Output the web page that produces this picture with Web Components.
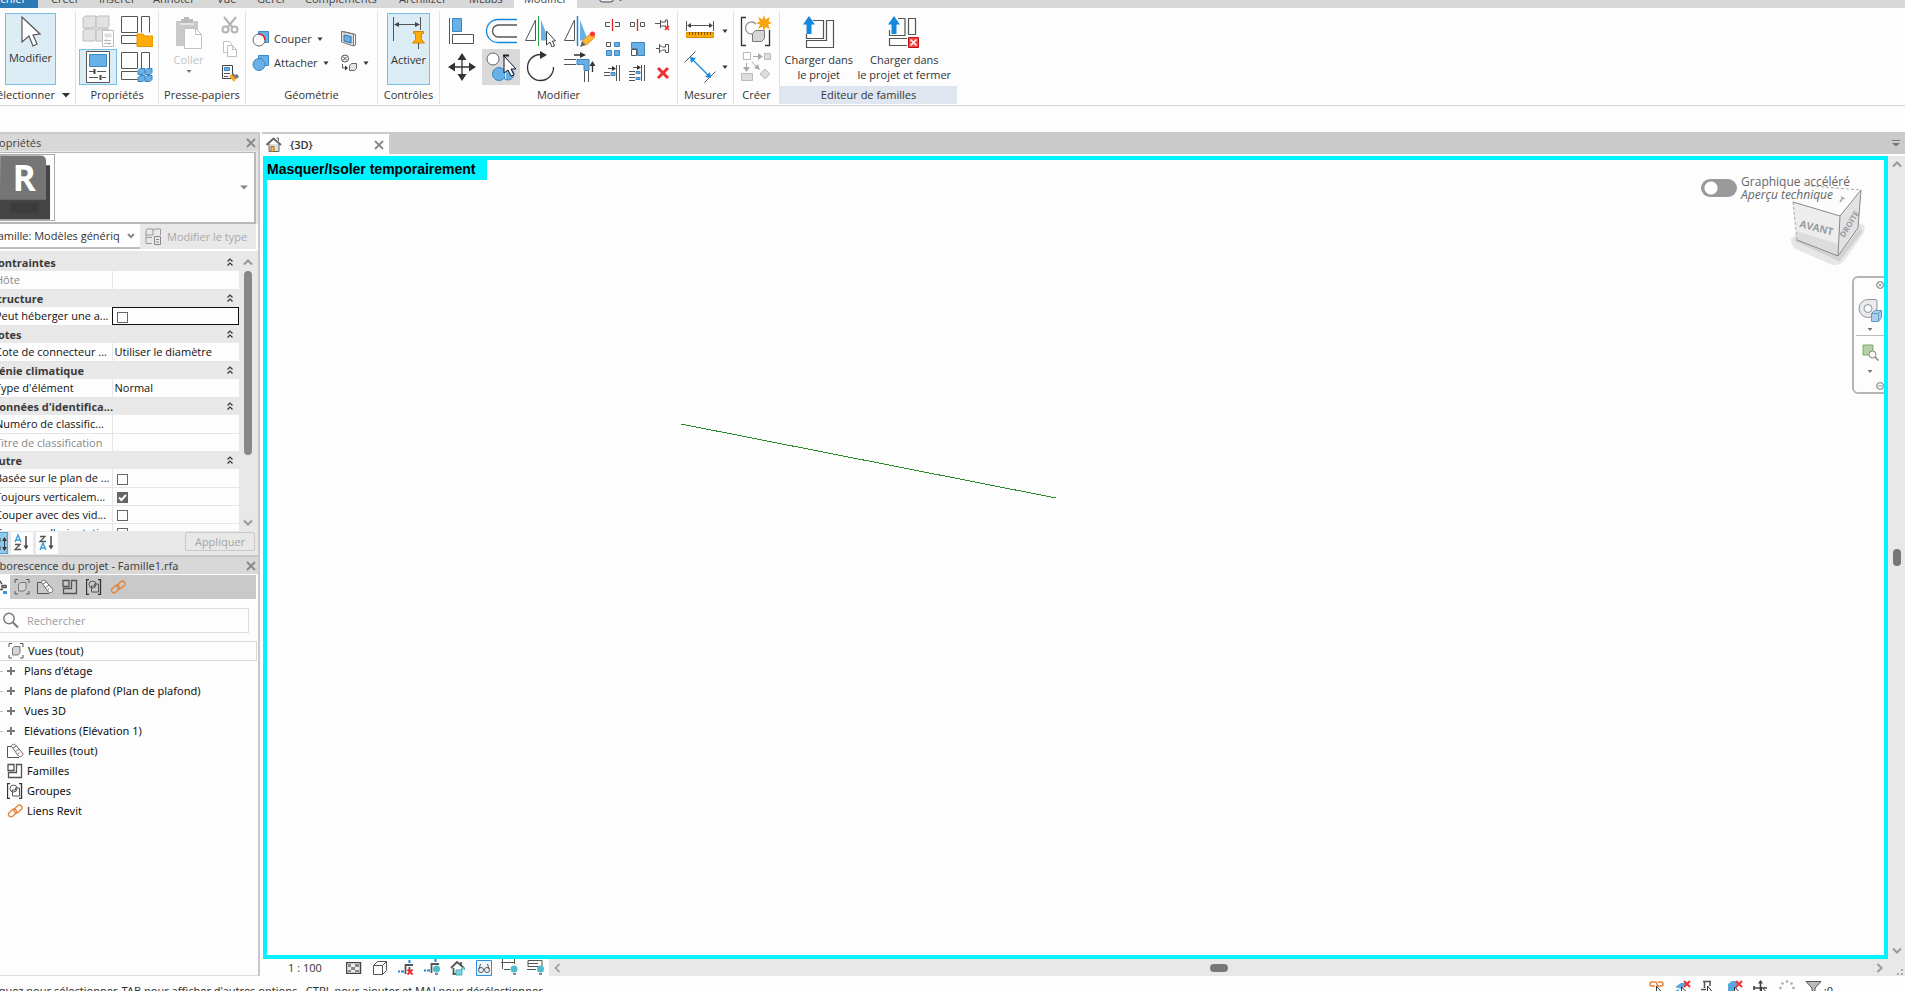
<!DOCTYPE html>
<html lang="fr">
<head>
<meta charset="utf-8">
<title>Famille1.rfa</title>
<style>
html,body{margin:0;height:100%;overflow:hidden;background:#fdfdfd}
body{font:11px/16px "Open Sans","Noto Sans",sans-serif;color:#333}
</style>
</head>
<body>
<rv-app></rv-app>
<script>
const RESET = `*{box-sizing:border-box}button,input,select{font:inherit;color:inherit;margin:0;padding:0;border:0;background:none}`;
function define(name, css, html, setup) {
  const t = document.createElement('template');
  t.innerHTML = `<style>${RESET}${css}</style>${html}`;
  customElements.define(name, class extends HTMLElement {
    constructor() { super(); this.attachShadow({mode: 'open'}).append(t.content.cloneNode(true)); }
    connectedCallback() { if (setup) setup(this, this.shadowRoot); }
  });
}

const G = 'fill="none" stroke="#555"', B = 'fill="#68b1e6" stroke="#3c87c0"';
const cube4 = (x, y, s, f, k) => [[0,0],[1,0],[0,1],[1,1]].map(([i,j]) => `<path d="M${x+i*s} ${y+2+j*s}l2-2h${s-2}v${s-3}l-2 2h-${s-2}z" fill="${f}" stroke="${k}"/>`).join('');
const redx = (x, y, s, w = 2) => `<path d="M${x} ${y}l${s} ${s}M${x+s} ${y}l-${s} ${s}" stroke="#f03030" stroke-width="${w}" fill="none"/>`;
const rooms = '<path d="M.5 1.500h16v16H.5zM20.500 17.500v-16h8v16M.5 20.500h16M.5 20.500v8h16" fill="none" stroke="#555"/>';
const ICONS = {
 caret: [8,5,'<path d="M1.500.5h5L4 4z" fill="#333"/>'],
 caretBig: [8,6,'<path d="M0 1h8L4 5.500z" fill="#333"/>'],
 caretGray: [8,5,'<path d="M0 .5h8L4 4.500z" fill="#888"/>'],
 caretSmall: [6,5,'<path d="M.5 1h5L3 4z" fill="#777"/>'],
 chevDown: [8,6,'<path d="M1 1l3 3 3-3" fill="none" stroke="#888" stroke-width="2"/>'],
 cursor: [20,32,'<path d="M1 1v25l7-6 4 10 4-2-4-9 7-1z" fill="#fff" stroke="#555" stroke-width="1.200"/>'],
 types: [32,32, cube4(1,1,13,'#e2e2e2','#bdbdbd') + '<path d="M20.500 15.500h11v16h-11z" fill="#fff" stroke="#bbb"/><path d="M22.500 18.500h7v4h-7z" fill="#ddd"/><path d="M22 25.500h7m-7 3h7m-5-4.500v3m3 0v3" stroke="#bbb"/>'],
 catFolder: [32,32, rooms + '<path d="M16 19h6l2 2h8v10.500H16z" fill="#ffab0a" stroke="#e59400"/>'],
 catCubes: [32,32, rooms + cube4(17,17.500,7,'#68b1e6','#3c87c0')],
 propPanel: [24,32,'<path d="M.5.5h23v31H.5z" fill="#fff" stroke="#555"/><path d="M3.500 3.500h17v12h-17z" '+B+'/><path d="M3 20.500h5m3 0h9M3 26.500h9m4 0h4" stroke="#555"/><path d="M8.500 18v5m6 1v5" stroke="#444" stroke-width="2"/>'],
 paste: [28,34,'<path d="M1 5h22v25H1z" fill="#c9c9c9"/><path d="M6 3h3V1h5v2h4v4H6z" fill="#bbb"/><path d="M5 8h14" stroke="#fff"/><path d="M9.500 12.500h11l6 6v14h-17z" fill="#fff" stroke="#c2c2c2"/><path d="M20.500 12.500v6h6" fill="none" stroke="#c2c2c2"/>'],
 cut: [18,18,'<path d="M3 1l9 11M15 1L6 12" stroke="#b4b4b4" stroke-width="2"/><circle cx="4.500" cy="13.500" r="3" fill="none" stroke="#b4b4b4" stroke-width="2"/><circle cx="13.500" cy="13.500" r="3" fill="none" stroke="#b4b4b4" stroke-width="2"/>'],
 copyDoc: [14,16,'<path d="M.5.5h6l2 2v9h-8z" fill="#fff" stroke="#bfbfbf"/><path d="M4.500 4.500h5l4 4v7h-9z" fill="#fff" stroke="#bfbfbf"/><path d="M9.500 4.500v4h4" fill="none" stroke="#bfbfbf"/>'],
 matchType: [18,18,'<path d="M1.500 1.500h10v13h-10z" fill="#fff" stroke="#444"/><path d="M3.500 3.500h5v3h-5z" '+B+'/><path d="M3 9.500h6M3 12.500h4" stroke="#555"/><path d="M8 12l3-2 4 5-2 3z" fill="#ffa61a"/><path d="M12 9l2 2 2-1 2 3-3 2-4-4z" fill="#777"/>'],
 coupe: [18,18,'<path d="M6.500 1.500h10v11h-10z" '+B+'/><circle cx="7" cy="10" r="6" fill="#fff" stroke="#666"/><path d="M7 4a6 6 0 0 1 6 6" fill="none" stroke="#e02020" stroke-width="1.500"/>'],
 attach: [18,18,'<path d="M6.500 1.500h10v10h-10z" '+B+'/><circle cx="7" cy="10.500" r="6" '+B+'/>'],
 opening: [18,18,'<path d="M1.500 1.500l12 2.500v12l-12-4z" fill="#dcdcdc" stroke="#777"/><path d="M1.500 1.500h2l12 3v10.500l-2 1" fill="none" stroke="#777"/><path d="M4 5l7 1.500v6.500l-7-2z" fill="#68b1e6" stroke="#2a6fae"/>'],
 paint: [18,18,'<circle cx="5" cy="4.500" r="3.500" '+G+'/><path d="M3 2.500l4 4m0-4l-4 4M2.500 10v4h3" '+G+'/><path d="M9.500 11.500l2-2h5v5l-2 2h-5z" fill="#e4e4e4" stroke="#666"/><path d="M5 11.500l3 2.500-3 2.500z" fill="#333"/>'],
 pinDim: [34,34,'<path d="M1.500 1v24M28.500 1v13M3 8.500h24" '+G+'/><path d="M2 8.500l5-2.500v5zM28 8.500l-5-2.500v5z" fill="#444"/><path d="M21.500 15.500h10v2h-2v6l3 3.500h-12l3-3.500v-6h-2z" fill="#ffab0a" stroke="#d48800"/><path d="M26.500 27v6" stroke="#555"/>'],
 align: [28,28,'<path d="M1.500 1v26" stroke="#555"/><path d="M4.500 1.500h9v13h-9z" '+B+'/><path d="M4.500 17.500h21v9h-21z" '+G+'/>'],
 offset: [32,26,'<path d="M32 1.500H13a11.500 11.500 0 0 0 0 23h19" fill="none" stroke="#1488dd" stroke-width="1.300"/><path d="M32 7H13.500a6 6 0 0 0 0 12H32" '+G+' stroke-width="1.300"/>'],
 mirrorPick: [32,32,'<path d="M1.500 25.500L11.500 5v20.500z" '+G+'/><path d="M14.500 1v30" stroke="#1fa04c"/><path d="M17 25.500V5l8 20.500z" fill="#68b1e6"/><path d="M22.500 16v14l3.500-3 2 5 2.500-1-2-5h3z" fill="#fff" stroke="#444"/>'],
 mirrorDraw: [32,32,'<path d="M1.500 25.500L11.500 5v20.500z" '+G+'/><path d="M14.500 1v30" stroke="#1488dd" stroke-width="1.500"/><path d="M17 25.500V5l8 20.500z" fill="#68b1e6"/><path d="M17 32l2-6 4 4z" fill="#666"/><path d="M19.500 26L28 18l4 4-8.500 8z" fill="#ffb636" stroke="#e09a20"/><circle cx="29.500" cy="19" r="2.500" fill="#f33"/>'],
 move: [28,28,'<path d="M14 4v20M4 14h20" stroke="#333" stroke-width="1.300"/><path d="M14 0l4.500 7h-9zM14 28l4.500-7h-9zM0 14l7-4.500v9zM28 14l-7-4.500v9z" fill="#333"/>'],
 copy: [32,32,'<circle cx="8" cy="8" r="6" fill="#fff" stroke="#666"/><circle cx="23" cy="23" r="6" '+B+'/><circle cx="14" cy="23" r="6.500" '+B+' /><path d="M20.500 18v10" stroke="#ddd"/><path d="M18 4.500h6" stroke="#223" stroke-width="2"/><path d="M19 5v17l4-3 3 6 3-1-3-6h5z" fill="#fff" stroke="#112"/>'],
 rotate: [30,32,'<path d="M16 3.500A13 13 0 1 0 28.500 16" fill="none" stroke="#333" stroke-width="1.300"/><path d="M15 0l7 4-7 4z" fill="#333"/>'],
 trim: [32,32,'<path d="M1 8.500h12M1 13.500h12M21.500 20v11M25.500 20v11" '+G+'/><path d="M14 8.500h12v11h-5v-6h-7z" '+B+'/><path d="M11 4h8M29.500 13v8" stroke="#333" stroke-width="1.300"/><path d="M17 1l6 3-6 3zM26.500 15l3-5 3 5z" fill="#333"/>'],
 split: [18,14,'<path d="M6 4.500H1.500v4H6M11 4.500h4.500v4H11" '+G+'/><path d="M8.500 1v12" stroke="#d22" stroke-width="1.300"/>'],
 splitGap: [18,14,'<path d="M1.500 4.500h4v4h-4zM11.500 4.500h4v4h-4z" '+G+'/><path d="M8.500 1v12" stroke="#d22" stroke-width="1.300"/>'],
 unpin: [16,14,'<path d="M0 5.500h5M5.500 2v8M5.500 4h5v-2h2v8h-2v-2h-5" '+G+'/>'+redx(10,8,4,1.600)],
 pin: [16,12,'<path d="M1 5.500h4M4.500 1v9M4.500 3h2l1 1h3V1.500h3v8h-3V7h-3l-1 1h-2" '+G+'/>'],
 array: [16,16,'<path d="M1.500 1.500h4v4h-4z" '+G+'/><path d="M9.500 1.500h5v4h-5zM9.500 9.500h5v5h-5zM1.500 9.500h5v5h-5z" '+B+'/>'],
 scale: [16,16,'<path d="M1.500 1.500h13v13h-7v-7h-6z" '+B+'/><path d="M1.500 8.500h5v6h-5z" fill="#fff" stroke="#555"/>'],
 trim1: [18,16,'<path d="M12.500 0v16M15.500 0v16M0 7.500h6M0 10.500h6M4 3.500h6" '+G+'/><path d="M7 7.500h4v3H7z" '+B+'/><path d="M8 1l4 2.500L8 6z" fill="#333"/>'],
 trim2: [18,16,'<path d="M12.500 0v16M15.500 0v16M0 6.500h6M0 9.500h6M0 12.500h6M0 15.500h6M4 2.500h6" '+G+'/><path d="M7 6.500h4v2H7zM7 12.500h4v2H7z" '+B+'/><path d="M8 0l4 2.500L8 5z" fill="#333"/>'],
 del: [14,14, redx(2,2,10,3)],
 ruler: [32,20,'<path d="M2.500 0v10M29.500 0v10M4 4.500h24" '+G+'/><path d="M3 4.500L7 2v5zM29 4.500L25 2v5z" fill="#444"/><path d="M2.500 11.500h27v5h-27z" fill="#ffab0a" stroke="#d98c00"/><path d="M5.500 11v3m3-3v3m3-3v3m3-3v3m3-3v3m3-3v3m3-3v3m3-3v3" stroke="#7a5200"/>'],
 dim: [32,32,'<path d="M.5 11.500l11-11M20.500 31.500l11-11" '+G+'/><path d="M8 8l17 17" stroke="#1488dd" stroke-width="1.300"/><path d="M6 6l6 1-5 5zM27 27l-6-1 5-5z" fill="#1488dd"/>'],
 group: [32,32,'<path d="M6 2.500H1.500v28H6M25 30.500h4.500V15" fill="none" stroke="#333" stroke-width="1.300"/><path d="M12 19a6 6 0 1 1 4-10" fill="none" stroke="#999" stroke-width="1.300"/><path d="M12.500 18.500l3-3h9v8l-3 3h-9z" fill="#d5d5d5" stroke="#777"/><path d="M24 0l1.500 4.500L30 2l-1.500 4.500L32 8l-4 1.500 2 4.500-4.500-2L24 16l-1.500-4.500L18 14l2-4.500L16 8l4-1.500L18 2l4.500 2.500z" fill="#f7a30c"/>'],
 similar: [32,32,'<path d="M3.500 1.500h7v7h-7z" fill="#fff" stroke="#bbb"/><path d="M24.500 2.500h6v6h-6zM1.500 22.500h11v7h-11zM25 18l5 5-5 5-5-5z" fill="#ddd" stroke="#bbb"/><path d="M13 5.500h6M6.500 12v5M12 11l5 5" stroke="#aaa"/><path d="M18 2l5 3.500L18 9zM3 16h7l-3.500 5zM20 19l-6-2 4-4z" fill="#aaa"/>'],
 load: [34,34,'<path d="M11 4.500h10.500v18H4.500V18M24.500 4.500h7v27h-27v-7h20z" '+G+' stroke-width="1.200"/><path d="M7 0l6 8.500H9.500V18h-5V8.500H1z" fill="#1488dd"/>'],
 loadClose: [34,34,'<path d="M11 2.500h7v17H2.500V14M21.500 2.500h7v16h-7zM20 22.500H2.500v7H20" '+G+' stroke-width="1.200"/><path d="M7 0l6 8.500H9.500V18h-5V8.500H1z" fill="#1488dd"/><path d="M21.500 21.500h10v10h-10z" fill="#f44" stroke="#b11"/><path d="M23.500 23.500l6 6m0-6l-6 6" stroke="#fff" stroke-width="1.500"/>'],
 close: [10,10,'<path d="M1 1l8 8M9 1L1 9" stroke="#888" stroke-width="1.800"/>'],
 chevs: [6,8,'<path d="M.5 3.500L3 1l2.500 2.500M.5 7.500L3 5l2.500 2.500" fill="none" stroke="#333" stroke-width="1.200"/>'],
 up: [10,7,'<path d="M1 5.500L5 1.500l4 4" fill="none" stroke="#999" stroke-width="2"/>'],
 down: [10,7,'<path d="M1 1.500l4 4 4-4" fill="none" stroke="#999" stroke-width="2"/>'],
 left: [7,10,'<path d="M5.500 1L1.500 5l4 4" fill="none" stroke="#999" stroke-width="1.600"/>'],
 right: [7,10,'<path d="M1.500 1l4 4-4 4" fill="none" stroke="#999" stroke-width="2"/>'],
 tabList: [10,8,'<path d="M1 1.500h8" stroke="#777"/><path d="M1 4h8L5 7.500z" fill="#777"/>'],
 grip: [8,8,'<path d="M5 0h2v2H5zM5 4h2v2H5zM1 4h2v2H1z" fill="#aaa"/>'],
 editType: [17,17,'<path d="M1 2.500l1-1.500h6v6H1zM8.500 2.500l1-1.500h6v6M1 9.500h6M1 7v8.500h6" fill="none" stroke="#999"/><path d="M9.500 8.500h6v8h-6zM11 11.500h3M11 14h3" fill="none" stroke="#888"/>'],
 sortCat: [22,22,'<path d="M9 5h4v4H9zM9 13h4v4H9zM17.500 5v12" fill="#68b1e6" stroke="#345"/><path d="M15 8l2.500-4L20 8zM15 14l2.500 4 2.500-4z" fill="#333"/>'],
 sortAZ: [22,22,'<path d="M4 10l3-7 3 7M5 8h4" fill="none" stroke="#3b99dc" stroke-width="1.300"/><path d="M4 12.500h5l-5 5h6" fill="none" stroke="#555" stroke-width="1.300"/><path d="M15 4v11" stroke="#444" stroke-width="1.500"/><path d="M12.500 13.500h5L15 17.500z" fill="#444"/>'],
 sortZA: [22,22,'<path d="M4 4.500h5l-5 5h6" fill="none" stroke="#555" stroke-width="1.300"/><path d="M4 18l3-7 3 7M5 16h4" fill="none" stroke="#3b99dc" stroke-width="1.300"/><path d="M15 4v11" stroke="#444" stroke-width="1.500"/><path d="M12.500 13.500h5L15 17.500z" fill="#444"/>'],
 treeAll: [16,16,'<path d="M8 1l3 4M11 6.500h4v2h-4zM8 10.500h4" '+G+' stroke-width="1.500"/><path d="M12 12h4v3h-4z" fill="#3b99dc"/>'],
 views: [16,16,'<path d="M1 4V.5h3M12 .5h3V4M1 12v3h3M12 15h3v-3" '+G+'/><path d="M4.500 5l2-1.500H12v6L10 12H4.500z" fill="#d4d4d4" stroke="#777"/>'],
 sheets: [17,16,'<path d="M5 3.500H.5v11H12" '+G+'/><path d="M6 5.500L4.500 3.500c0-2 2.500-3 4-1.500l7 8c1.500 2-1.500 5-4 3z" fill="#fff" stroke="#666"/><path d="M6 5l3.500-2M8.500 8.500L12 6M11 11l1.500-1.500" stroke="#777" fill="none"/>'],
 families: [16,16,'<path d="M1 1.500h6v6H1zM9.500 1.500h5v13H1.500v-5h8z" '+G+' stroke-width="1.300"/>'],
 groups: [16,16,'<path d="M3 .5H.5v15H3M12 .5h2.500v15H12" fill="none" stroke="#333" stroke-width="1.300"/><circle cx="6.500" cy="5.500" r="3.500" '+G+'/><path d="M5.500 12.500V7h3V5h4v8h-7z" '+G+'/>'],
 link: [16,16,'<rect x="6.500" y="3.500" width="9" height="5" rx="2.500" transform="rotate(-42 11 6)" fill="none" stroke="#e58337" stroke-width="1.300"/><rect x="1" y="7.500" width="9" height="5" rx="2.500" transform="rotate(-42 5.500 10)" fill="none" stroke="#e58337" stroke-width="1.300"/>'],
 search: [17,17,'<circle cx="7" cy="6.500" r="5.200" fill="none" stroke="#777" stroke-width="1.400"/><path d="M11 10.500l5 5" stroke="#777" stroke-width="2"/>'],
 plus: [8,8,'<path d="M4 0v8M0 4h8" stroke="#777" stroke-width="2"/>'],
 home: [16,16,'<path d="M3 7v7.500h10V7" fill="#ddd" stroke="#666"/><path d="M10.500 1h2v3" fill="none" stroke="#666"/><path d="M.5 8L7.500 1.500 15 8" fill="none" stroke="#666" stroke-width="2"/><path d="M5 9.500h3v5H5z" fill="#f0c060" stroke="#a07020"/>'],
 detail: [16,12,'<path d="M.5.5h14v11H.5z" fill="#eee" stroke="#444" stroke-width="1.500"/><path d="M2 2h3v3H2zM9 2h4v3H9zM5 5h4v3H5zM2 8h3v2H2zM9 8h4v2H9z" fill="#888"/>'],
 style: [16,16,'<path d="M1.500 5.500h9v9h-9zM1.500 5.500l4-4h9l-4 4M14.500 1.500v9l-4 4" '+G+'/>'],
 cropOff: [16,16,'<path d="M7.500 14V5H15M11.500 7v5" '+G+' stroke-width="1.800"/><path d="M0 11.500h2M3 11.500h3M11.500 0v3" stroke="#1488dd" stroke-width="2"/>'+redx(9.500,9.500,5)],
 cropShow: [17,17,'<path d="M7.500 14V5H15" '+G+' stroke-width="1.800"/><path d="M0 11.500h2M3 11.500h3M11.500 0v3" stroke="#1488dd" stroke-width="2"/><circle cx="12.500" cy="10" r="3.500" fill="#4fbccb"/><path d="M11 14h3v2h-3z" fill="#888"/>'],
 lock: [16,16,'<path d="M1 8l6-6 7 6M3.500 8v6H7M11 2v4" '+G+' stroke-width="1.800"/><path d="M6 10h6v5H6zM11.500 10V8a2 2 0 0 1 3 0v2" fill="#7cd3de" stroke="#4fa9b8"/>'],
 glasses: [16,16,'<path d="M.5.5h15v15H.5z" fill="#eef5fb" stroke="#2a8fe0"/><circle cx="5" cy="10" r="2.500" '+G+'/><circle cx="11" cy="10" r="2.500" '+G+'/><path d="M3 9l1.500-5M13 9l-1.500-5" '+G+'/>'],
 dimView: [18,17,'<path d="M1.500 0v10M13.500 0v5M0 3.500h14M3 10.500h6" '+G+'/><circle cx="13" cy="10" r="3.500" fill="#4fbccb"/><path d="M12 14h3v2h-3z" fill="#888"/>'],
 constraint: [18,17,'<path d="M1 1.500h14v6H1zM1 4.500h10M0 10.500h9" '+G+'/><circle cx="13.500" cy="10" r="3.500" fill="#4fbccb"/><path d="M12 14h3v2h-3z" fill="#888"/>'],
 selLink: [16,16,'<path d="M6 6H3a2 2 0 0 1 0-4h3q2 0 2 2t2 2h2a2 2 0 0 0 0-4H9" fill="none" stroke="#e58337" stroke-width="1.500"/><path d="M7.500 6v9l5-3z" fill="#fff" stroke="#333"/>'],
 selUnder: [16,16,'<path d="M0 7l6-4h6l-5 6zM0 11l4-2v5z" fill="#5aa7dd"/><path d="M6.500 7v8l5-3z" fill="#fff" stroke="#333"/>'+redx(9,1,6)],
 selPin: [16,16,'<path d="M2 1.500h8M3.500 2v6M9 2v4M0 9.500h5" '+G+' stroke-width="1.500"/><path d="M6.500 6v9l5-3z" fill="#fff" stroke="#333"/>'],
 selFace: [16,16,'<path d="M1 4l4-3h5v12H1z" fill="#5aa7dd"/><path d="M7.500 7v8l5-3z" fill="#fff" stroke="#333"/>'+redx(9,1,6)],
 drag: [16,16,'<path d="M7.500 1v14M1 8h13M1 6v4" stroke="#444" stroke-width="1.600"/><path d="M5 3.500L7.500 0 10 3.500z" fill="#444"/><path d="M8.500 7v8l5-3z" fill="#fff" stroke="#333"/>'],
 spin: [16,16,'<g fill="#aaa"><circle cx="8" cy="1.500" r="1.300"/><circle cx="3.500" cy="3.500" r="1.300"/><circle cx="12.500" cy="3.500" r="1.300"/><circle cx="1.500" cy="8" r="1.300"/><circle cx="14.500" cy="8" r="1.300"/></g>'],
 filter: [18,16,'<path d="M1 1.500h15L10 8v7L7 12V8z" fill="#bbb" stroke="#555"/>'],
 wheel: [24,24,'<path d="M10 1.500h7a2 2 0 0 1 2 2V10a9 9 0 1 1-9-8.500z" fill="#e9eaec" stroke="#8d949c"/><circle cx="10" cy="10.500" r="4" fill="#f8f8f8" stroke="#8d949c"/><path d="M13.500 15.500l3-3h7v7l-3 4h-7z" fill="#a9cdea" stroke="#5f9cca"/><path d="M13.500 15.500h7v8m0-8l3-3" fill="none" stroke="#5f9cca"/>'],
 zoomBox: [17,17,'<path d="M1 1h10v10H1z" fill="#b5cfa6" stroke="#7da972"/><circle cx="10.500" cy="10.500" r="3.500" fill="#f8f8f8" stroke="#888"/><path d="M13 13l3.500 3.500" stroke="#888" stroke-width="1.500"/>'],
 dotX: [8,8,'<circle cx="4" cy="4" r="3.300" fill="none" stroke="#999" stroke-width="1.300"/><path d="M2.500 2.500l3 3m0-3l-3 3" stroke="#999"/>'],
 dotM: [8,8,'<circle cx="4" cy="4" r="3.300" fill="none" stroke="#999" stroke-width="1.300"/><path d="M2 4h4" stroke="#999"/>'],
 play: [24,12,'<path d="M.5 0v3a3 3 0 0 0 3 3h8a3 3 0 0 0 3-3V0" fill="#e8ecf4" stroke="#445"/><path d="M19 3h5l-2.500 2z" fill="#333"/>'],
 check: [11,11,'<path d="M2 5.500L4.500 8 9 3" fill="none" stroke="#fff" stroke-width="2"/>'],
 line: [376,76,'<path d="M0 1L375 75" stroke="#2b8a2b" shape-rendering="crispEdges"/>'],
};
define('rv-icon', ':host{display:inline-flex;flex:none}svg{display:block}', '', (el, root) => {
  if (root.querySelector('svg')) return;
  const [w, h, m] = ICONS[el.getAttribute('name')];
  const holder = document.createElement('template');
  holder.innerHTML = `<svg width="${w}" height="${h}" viewBox="0 0 ${w} ${h}" aria-hidden="true">${m}</svg>`;
  root.append(holder.content);
});

define('rv-tool', `
:host{display:block;width:38px;height:36px}
button{width:100%;height:100%;display:flex;align-items:center;justify-content:center;gap:4px;white-space:nowrap;border:1px solid transparent}
:host([small]){width:25px;height:24px}
:host([row]){width:auto;height:24px}:host([row]) button{justify-content:flex-start}
:host([split]) button{gap:5px}
:host([tall]){height:72px;width:51px}
:host([tall]) button{flex-direction:column;justify-content:flex-start;gap:2px;line-height:15px;padding-top:2px;text-align:center}
:host([on]) button{background:#dcecf5;border-color:#76bfe3}
:host([hover]) button{background:#d9d9d9}
:host([off]) button{color:#c4c4c4}
`, '<button type="button"><slot></slot></button>', (el, root) => {
  if (el.title) root.querySelector('button').setAttribute('aria-label', el.title);
});

define('rv-panel', `
:host{display:flex;flex-direction:column;flex:none;margin-top:3px;border-right:1px solid #e2e2e2;height:93px}
.body{flex:1;padding:2px 3px 1px;display:flex}
.label{height:18px;line-height:18px;text-align:center;white-space:nowrap;color:#333}
:host([context]){border:0}:host([context]) .label{background:#e0e6f0}
::slotted(.grid){display:grid;grid-template-columns:repeat(2,38px);grid-auto-rows:36px;column-gap:1px}
`, '<div class="body"><slot></slot></div><div class="label"><slot name="label"></slot></div>');

define('rv-tabs', `
:host{display:flex;flex:none;height:8px;background:#d8d8d8;align-items:flex-end;overflow:hidden}
a{color:#444;text-decoration:none;height:17px;line-height:16px;padding-bottom:1px;white-space:nowrap;flex:none}
.file{background:#2b79b5;color:#fff;width:52px;padding-left:6px;margin-right:13px}
.t1{width:48px}.t2{width:54px}.t3{width:64px}.t4{width:40px}.t5{width:48px}.t6{width:94px}.t7{width:70px}.t8{width:45px}
.cur{background:#fdfdfd;width:63px;text-align:center;margin-right:22px}
`, `<a class="file" href="#">Fichier</a><a class="t1" href="#">Créer</a><a class="t2" href="#">Insérer</a><a class="t3" href="#">Annoter</a><a class="t4" href="#">Vue</a><a class="t5" href="#">Gérer</a><a class="t6" href="#">Compléments</a><a class="t7" href="#">Archilizer</a><a class="t8" href="#">MLabs</a><a class="cur" href="#">Modifier</a><rv-icon name="play"></rv-icon>`);

define('rv-ribbon', `
:host{display:flex;flex:none;height:98px;border-bottom:1px solid #d5d5d5}
.sel{width:90px}.props{width:83px}.clip{width:87px}.geo{width:132px}.ctl{width:62px}.mod{width:238px}.mes{width:56px}.cre{width:46px}.fam{width:177px}
.sel rv-tool{margin-left:16px}
.col{display:grid;grid-template-rows:repeat(3,24px);margin-left:3px}
.clip rv-tool[tall]{width:51px;margin-left:1px}
.geo .g{display:grid;grid-template-columns:88px 34px;grid-auto-rows:24px;align-content:end;margin-left:2px;height:62px}
.ctl rv-tool{width:43px;margin-left:6px}
.grid4{display:grid;grid-template-columns:repeat(4,38px);grid-auto-rows:36px;column-gap:1px}
.grid3{display:grid;grid-template-columns:repeat(3,25px);grid-auto-rows:24px;margin-left:2px}
.two{display:grid;grid-auto-rows:36px}.mes .two{margin-left:2px}
.mes rv-tool{height:36px}
.fam .l1{width:72px}.fam .l2{width:100px}
.sl{display:flex;align-items:center;gap:7px;padding-left:5px}
`, `
<rv-panel class="sel"><rv-tool tall on><rv-icon name="cursor"></rv-icon><span>Modifier</span></rv-tool><span slot="label" class="sl">Sélectionner <rv-icon name="caretBig"></rv-icon></span></rv-panel>
<rv-panel class="props"><div class="grid"><rv-tool title="Propriétés du type"><rv-icon name="types"></rv-icon></rv-tool><rv-tool title="Catégorie de la famille"><rv-icon name="catFolder"></rv-icon></rv-tool><rv-tool on title="Propriétés"><rv-icon name="propPanel"></rv-icon></rv-tool><rv-tool title="Types de famille"><rv-icon name="catCubes"></rv-icon></rv-tool></div><span slot="label">Propriétés</span></rv-panel>
<rv-panel class="clip"><rv-tool tall off><rv-icon name="paste"></rv-icon><span>Coller</span><rv-icon name="caretSmall"></rv-icon></rv-tool><div class="col"><rv-tool small title="Couper"><rv-icon name="cut"></rv-icon></rv-tool><rv-tool small title="Copier"><rv-icon name="copyDoc"></rv-icon></rv-tool><rv-tool small title="Correspondance du type"><rv-icon name="matchType"></rv-icon></rv-tool></div><span slot="label">Presse-papiers</span></rv-panel>
<rv-panel class="geo"><div class="g"><rv-tool row><rv-icon name="coupe"></rv-icon><span>Couper</span><rv-icon name="caret"></rv-icon></rv-tool><rv-tool row title="Ouverture"><rv-icon name="opening"></rv-icon></rv-tool><rv-tool row><rv-icon name="attach"></rv-icon><span>Attacher</span><rv-icon name="caret"></rv-icon></rv-tool><rv-tool row title="Peindre"><rv-icon name="paint"></rv-icon><rv-icon name="caret"></rv-icon></rv-tool></div><span slot="label">Géométrie</span></rv-panel>
<rv-panel class="ctl"><rv-tool tall on><rv-icon name="pinDim"></rv-icon><span>Activer</span></rv-tool><span slot="label">Contrôles</span></rv-panel>
<rv-panel class="mod"><div class="grid4"><rv-tool title="Aligner"><rv-icon name="align"></rv-icon></rv-tool><rv-tool title="Décaler"><rv-icon name="offset"></rv-icon></rv-tool><rv-tool title="Symétrie - Choisir un axe"><rv-icon name="mirrorPick"></rv-icon></rv-tool><rv-tool title="Symétrie - Dessiner un axe"><rv-icon name="mirrorDraw"></rv-icon></rv-tool><rv-tool title="Déplacer"><rv-icon name="move"></rv-icon></rv-tool><rv-tool hover title="Copier"><rv-icon name="copy"></rv-icon></rv-tool><rv-tool title="Rotation"><rv-icon name="rotate"></rv-icon></rv-tool><rv-tool title="Ajuster"><rv-icon name="trim"></rv-icon></rv-tool></div>
<div class="grid3"><rv-tool small title="Scinder"><rv-icon name="split"></rv-icon></rv-tool><rv-tool small title="Scinder avec espace"><rv-icon name="splitGap"></rv-icon></rv-tool><rv-tool small title="Déverrouiller"><rv-icon name="unpin"></rv-icon></rv-tool><rv-tool small title="Réseau"><rv-icon name="array"></rv-icon></rv-tool><rv-tool small title="Echelle"><rv-icon name="scale"></rv-icon></rv-tool><rv-tool small title="Verrouiller"><rv-icon name="pin"></rv-icon></rv-tool><rv-tool small title="Prolonger un élément"><rv-icon name="trim1"></rv-icon></rv-tool><rv-tool small title="Prolonger plusieurs éléments"><rv-icon name="trim2"></rv-icon></rv-tool><rv-tool small title="Supprimer"><rv-icon name="del"></rv-icon></rv-tool></div><span slot="label">Modifier</span></rv-panel>
<rv-panel class="mes"><div class="two"><rv-tool row split title="Mesurer"><rv-icon name="ruler"></rv-icon><rv-icon name="caret"></rv-icon></rv-tool><rv-tool row split title="Cote alignée"><rv-icon name="dim"></rv-icon><rv-icon name="caret"></rv-icon></rv-tool></div><span slot="label">Mesurer</span></rv-panel>
<rv-panel class="cre"><div class="two"><rv-tool title="Créer un groupe"><rv-icon name="group"></rv-icon></rv-tool><rv-tool title="Créer un élément similaire"><rv-icon name="similar"></rv-icon></rv-tool></div><span slot="label">Créer</span></rv-panel>
<rv-panel class="fam" context><rv-tool tall class="l1"><rv-icon name="load"></rv-icon><span>Charger dans<br>le projet</span></rv-tool><rv-tool tall class="l2"><rv-icon name="loadClose"></rv-icon><span>Charger dans<br>le projet et fermer</span></rv-tool><span slot="label">Editeur de familles</span></rv-panel>`);

define('rv-head', `
:host{display:flex;flex:none;height:17px;background:#d8d8d8;align-items:center;justify-content:space-between;padding:0 2px;color:#444}
button{display:flex}`, '<span><slot></slot></span><button type="button" aria-label="Fermer"><rv-icon name="close"></rv-icon></button>');

const rows = [['g','Contraintes'],['d','Hôte',''],['g','Structure'],['k','Peut héberger une a...',0,1],['g','Cotes'],['r','Cote de connecteur ...','Utiliser le diamètre'],['g','Génie climatique'],['r',"Type d'élément",'Normal'],['g',"Données d'identifica..."],['r','Numéro de classific...',''],['d','Titre de classification',''],['g','Autre'],['k','Basée sur le plan de ...',0],['k','Toujours verticalem...',1],['k','Couper avec des vid...',0],['k',"Conserver l'orientati...",0]];
const rowHtml = rows.map(([t, n, v, f], i) => t === 'g'
  ? `<tr class="g"><th colspan="2" scope="rowgroup"><div>${n}<rv-icon name="chevs"></rv-icon></div></th></tr>`
  : t === 'k' ? `<tr><td><label for="c${i}">${n}</label></td><td class="v${f ? ' focus' : ''}"><span class="box"><input type="checkbox" id="c${i}"${v ? ' checked' : ''}>${v ? '<rv-icon name="check"></rv-icon>' : ''}</span></td></tr>`
  : `<tr class="${t}"><td>${n}</td><td class="v">${v}</td></tr>`).join('');

define('rv-properties', `
:host{display:flex;flex-direction:column;flex:none;background:#e8e8e8}
.type{height:72px;margin:1px 2px 0 0;border:2px solid #b8b8b8;border-width:1px 2px 2px 0;background:#fdfdfd;display:flex;align-items:center;justify-content:space-between;padding-right:6px}
.thumb{width:69px;height:67px;border:1px solid #aaa;display:flex;justify-content:flex-end;padding-right:2px}
.pick{height:27px;display:flex;background:#fdfdfd;border-bottom:2px solid #fdfdfd;align-items:stretch}
.s{width:154px;border-bottom:2px solid #bdbdbd;display:flex;position:relative}
select{appearance:none;width:100%;padding-left:6px;outline:0}
.s rv-icon{position:absolute;right:5px;top:9px}
.edit{flex:1;background:#e8e8e8;color:#a8a8a8;display:flex;align-items:center;gap:5px;padding-left:5px;margin-right:2px;white-space:nowrap}
.wrap{display:flex;height:280px;padding-top:2px}
.clip{flex:1;overflow:hidden}
table{border-collapse:collapse;table-layout:fixed;width:100%;background:#fdfdfd;color:#111}
td,th{height:18px;padding:0;line-height:17px;white-space:nowrap;overflow:hidden}
td{border-bottom:1px solid #e5e5e5;padding-left:9px}
.v{border-left:1px solid #e5e5e5;padding-left:2px}
.g{background:#e8e8e8}.g div{display:flex;justify-content:space-between;align-items:center;padding:0 6px 0 5px}
.g th{text-align:left;font-weight:700;color:#3a3a3a}
.d{color:#888}
.focus{outline:1px solid #111;outline-offset:-1px}
.box{display:grid;width:11px;height:11px;margin:3px 0 0 2px}
.box>*{grid-area:1/1}
input{appearance:none;width:11px;height:11px;border:1px solid #666;display:block}
input:checked{background:#666}
.bar{width:17px;display:flex;flex-direction:column;align-items:center;padding:6px 0 5px;margin-right:2px}
.bar i{width:8px;height:184px;border-radius:4px;background:#888;margin:5px 0 auto}
.foot{height:26px;display:flex;align-items:flex-start;gap:3px;padding:1px 3px 0 0;border-bottom:2px solid #c6c6c6}
.foot .o{width:22px;height:22px;background:#fdfdfd}.foot .on{background:#8fc9ea;border:1px solid #4aa3d8}
.apply{margin-left:auto;width:70px;height:19px;border:1px solid #c8c8c8;border-radius:2px;color:#a5a5a5}
`, `<rv-head>Propriétés</rv-head>
<div class="type"><div class="thumb"><svg width="66" height="65" viewBox="0 0 66 65" aria-label="R"><path d="M50 10h14v55H0V44h50z" fill="#444"/><path d="M0 0h54q6 0 6 6v39H0z" fill="#757575"/><path d="M0 0h14l-1 45H0z" fill="#999"/><path d="M24 48h28v10H24z" fill="#3c3c3c"/><text x="26" y="36" font-family="Open Sans,sans-serif" font-weight="700" font-size="36" fill="#fff">R</text></svg></div><rv-icon name="caretGray"></rv-icon></div>
<div class="pick"><div class="s"><select aria-label="Famille"><option>Famille: Modèles génériq</option></select><rv-icon name="chevDown"></rv-icon></div><button type="button" class="edit"><rv-icon name="editType"></rv-icon>Modifier le type</button></div>
<div class="wrap"><div class="clip"><table><colgroup><col style="width:126px"><col></colgroup><tbody>${rowHtml}</tbody></table></div><div class="bar"><rv-icon name="up"></rv-icon><i></i><rv-icon name="down"></rv-icon></div></div>
<div class="foot"><button class="o on" aria-label="Trier par catégorie"><rv-icon name="sortCat"></rv-icon></button><button class="o" aria-label="Tri croissant"><rv-icon name="sortAZ"></rv-icon></button><button class="o" aria-label="Tri décroissant"><rv-icon name="sortZA"></rv-icon></button><button class="apply">Appliquer</button></div>`);

define('rv-browser', `
:host{display:flex;flex-direction:column;flex:1;min-height:0;background:#fdfdfd;border-bottom:1px solid #e0e0e0;font-family:"Noto Sans","Open Sans",sans-serif}
.strip{height:24px;margin:1px 2px 0 0;background:#c9c9c9;display:flex;align-items:center;gap:7px}
.strip button{display:flex;width:17px;justify-content:center}
.strip .on{width:24px;height:24px;background:#fdfdfd;align-items:center;justify-content:flex-end;padding-right:3px;margin-right:-4px}
.search{margin:9px 9px 8px 0;height:25px;border:1px solid #ddd;display:flex;align-items:center;gap:8px;padding-left:15px}
input{flex:1;min-width:0;outline:0}input::placeholder{color:#a5a5a5;opacity:1}
ul{list-style:none;margin:0;padding:0;color:#111;flex:1}
li{height:20px;display:flex;align-items:center;gap:4px;padding-left:21px}
li.top{border:1px solid #d8d8d8;margin-right:1px}
li.sub{gap:9px;padding-left:14px}li.sub::before{content:"";width:3px;height:1px;background:#bbb;margin-right:-5px}
`, `<rv-head>Arborescence du projet - Famille1.rfa</rv-head>
<div class="strip"><button class="on" aria-label="Tout"><rv-icon name="treeAll"></rv-icon></button><button aria-label="Vues"><rv-icon name="views"></rv-icon></button><button aria-label="Feuilles"><rv-icon name="sheets"></rv-icon></button><button aria-label="Familles"><rv-icon name="families"></rv-icon></button><button aria-label="Groupes"><rv-icon name="groups"></rv-icon></button><button aria-label="Liens"><rv-icon name="link"></rv-icon></button></div>
<div class="search"><rv-icon name="search"></rv-icon><input type="text" placeholder="Rechercher" aria-label="Rechercher"></div>
<ul><li class="top"><rv-icon name="views"></rv-icon>Vues (tout)</li><li class="sub"><rv-icon name="plus"></rv-icon>Plans d'étage</li><li class="sub"><rv-icon name="plus"></rv-icon>Plans de plafond (Plan de plafond)</li><li class="sub"><rv-icon name="plus"></rv-icon>Vues 3D</li><li class="sub"><rv-icon name="plus"></rv-icon>Elévations (Elévation 1)</li><li><rv-icon name="sheets"></rv-icon>Feuilles (tout)</li><li><rv-icon name="families"></rv-icon>Familles</li><li><rv-icon name="groups"></rv-icon>Groupes</li><li><rv-icon name="link"></rv-icon>Liens Revit</li></ul>`);

define('rv-canvas', `
:host{display:block;flex:1;position:relative;border:4px solid #00f3ff;background:#fdfdfd;overflow:hidden}
.tag{position:absolute;left:-4px;top:-4px;width:224px;height:24px;background:#00f3ff;color:#000;font:700 14px/26px "Liberation Sans",Arial,sans-serif;padding:0 4px;white-space:nowrap}
.line{position:absolute;left:414px;top:263px}
.accel{position:absolute;right:34px;top:15px;display:flex;align-items:center;gap:4px;font:12px/13px "Open Sans",sans-serif;color:#666;white-space:nowrap;z-index:1}
.accel input{appearance:none;width:36px;height:18px;border-radius:9px;background:radial-gradient(circle at 10px 9px,#fff 0 6px,#9a9a9a 7px)}
.accel em{display:block}
.cube{position:absolute;right:18px;top:23px}
.nav{position:absolute;right:-4px;top:116px;width:36px;height:118px;border:2px solid #b5b5b5;border-radius:6px 0 0 6px;background:#fdfdfd;display:flex;flex-direction:column;align-items:center;padding:3px 2px 2px}
.nav button{display:flex}
.nav .e{align-self:flex-end}.nav hr{width:100%;border:0;border-top:1px solid #bbb;margin:3px 0 8px}
.nav .w{margin:9px 0 5px}.nav .z{margin-bottom:8px}.nav .b{margin-top:auto}
`, `<span class="tag">Masquer/Isoler temporairement</span>
<rv-icon class="line" name="line"></rv-icon>
<svg class="cube" width="76" height="84" viewBox="0 0 76 84" aria-label="Cube de vue"><path d="M1 56l6-6 62-10 6 3-2 8-19 27q-6 6-14 3L6 66q-5-3-5-10z" fill="#e6e6e6"/><path d="M5 56l44 20 22-29" fill="none" stroke="#d2d2d2" stroke-width="4"/><path d="M3 19L21 3l50 4-21 26z" fill="#fbfbfb"/><path d="M3 19l47 14-2 40L7 57z" fill="#ededed"/><path d="M6 48l42 13v12L7 57z" fill="#dcdcdc"/><path d="M50 33L71 7l-3 38-20 28z" fill="#e2e2e2"/><path d="M3 19l47 14L71 7M50 33l-2 40L7 57M71 7l-3 38-20 28" fill="none" stroke="#888"/><path d="M3 19l4 38M21 3l50 4" fill="none" stroke="#aaa" stroke-dasharray="3 2"/><g font-family="Open Sans,sans-serif" font-weight="700" fill="#9a9aa2"><text x="9" y="44" font-size="10" transform="rotate(14 9 44)">AVANT</text><text x="54" y="55" font-size="8" transform="rotate(-58 54 55)">DROITE</text><text x="48" y="18" font-size="8" transform="rotate(30 48 18)">T</text></g></svg>
<label class="accel"><input type="checkbox" role="switch"><span>Graphique accéléré<em>Aperçu technique</em></span></label>
<div class="nav"><button class="e" aria-label="Fermer"><rv-icon name="dotX"></rv-icon></button><button class="w" aria-label="Disque de navigation"><rv-icon name="wheel"></rv-icon></button><rv-icon name="caretSmall"></rv-icon><hr><button class="z" aria-label="Zoom région"><rv-icon name="zoomBox"></rv-icon></button><rv-icon name="caretSmall"></rv-icon><button class="e b" aria-label="Options"><rv-icon name="dotM"></rv-icon></button></div>`);

define('rv-view', `
:host{display:flex;flex-direction:column;flex:1;min-width:0}
.tabs{height:22px;background:#cacaca;display:flex;align-items:flex-end;justify-content:space-between;padding:0 4px 0 0}
.tab{width:127px;height:20px;background:#fdfdfd;display:flex;align-items:center;padding:1px 5px 0 4px;font-weight:600;color:#333;gap:8px}
.tab button{display:flex;margin-left:auto}
.list{align-self:center}
.mid{flex:1;display:flex;min-height:0;margin:2px 0 0 1px}
.vbar{width:17px;background:#e8e8e8;display:flex;flex-direction:column;align-items:center;padding:5px 0}
.vbar i{width:8px;height:17px;border-radius:4px;background:#777;margin:auto}
.low{height:17px;display:flex;align-items:center}
.scale{width:84px;padding-left:26px;white-space:nowrap}
.tools{display:flex;gap:10px;width:203px}.tools button{width:16px;height:17px;display:flex;align-items:center;justify-content:center}
.hbar{flex:1;height:17px;background:#e8e8e8;display:flex;align-items:center;padding:0 5px}
.hbar i{width:18px;height:8px;border-radius:4px;background:#777;margin:auto}
.grip{width:17px;height:17px;background:#e8e8e8;padding:6px 2px 0 8px}
`, `<div class="tabs"><div class="tab"><rv-icon name="home"></rv-icon>{3D}<button aria-label="Fermer la vue"><rv-icon name="close"></rv-icon></button></div><rv-icon class="list" name="tabList"></rv-icon></div>
<div class="mid"><rv-canvas></rv-canvas><div class="vbar"><rv-icon name="up"></rv-icon><i></i><rv-icon name="down"></rv-icon></div></div>
<div class="low"><span class="scale">1 : 100</span><div class="tools">${[['detail','Niveau de détail'],['style','Style visuel'],['cropOff','Cadrer la vue'],['cropShow','Afficher le cadrage'],['lock','Vue 3D verrouillée'],['glasses','Masquer/Isoler'],['dimView','Plans de référence'],['constraint','Contraintes']].map(([n, l]) => `<button aria-label="${l}"><rv-icon name="${n}"></rv-icon></button>`).join('')}</div><div class="hbar"><rv-icon name="left"></rv-icon><i></i><rv-icon name="right"></rv-icon></div><div class="grip"><rv-icon name="grip"></rv-icon></div></div>`);

define('rv-status', `
:host{display:block;flex:none;height:15px;overflow:hidden;font-family:"Noto Sans","Open Sans",sans-serif}
.in{height:30px;display:flex;align-items:center;justify-content:space-between;padding-right:72px;white-space:pre}
.sel{display:flex;gap:10px;height:22px}.sel span{margin-left:-9px;line-height:22px}
`, `<div class="in"><span>Cliquez pour sélectionner, TAB pour afficher d'autres options,  CTRL pour ajouter et MAJ pour désélectionner.</span><div class="sel">${['selLink','selUnder','selPin','selFace','drag','spin','filter'].map(n => `<rv-icon name="${n}"></rv-icon>`).join('')}<span>:0</span></div></div>`);

define('rv-app', `
:host{display:flex;flex-direction:column;height:100vh;margin-left:-14px;overflow:hidden}
.opt{height:26px;flex:none}
.main{flex:1;min-height:0;display:flex}
.left{width:274px;flex:none;display:flex;flex-direction:column;border-right:2px solid #c8c8c8;border-top:2px solid #c8c8c8;margin-right:2px}
`, `<rv-tabs></rv-tabs><rv-ribbon></rv-ribbon><div class="opt"></div><div class="main"><div class="left"><rv-properties></rv-properties><rv-browser></rv-browser></div><rv-view></rv-view></div><rv-status></rv-status>`);
</script>
</body>
</html>
